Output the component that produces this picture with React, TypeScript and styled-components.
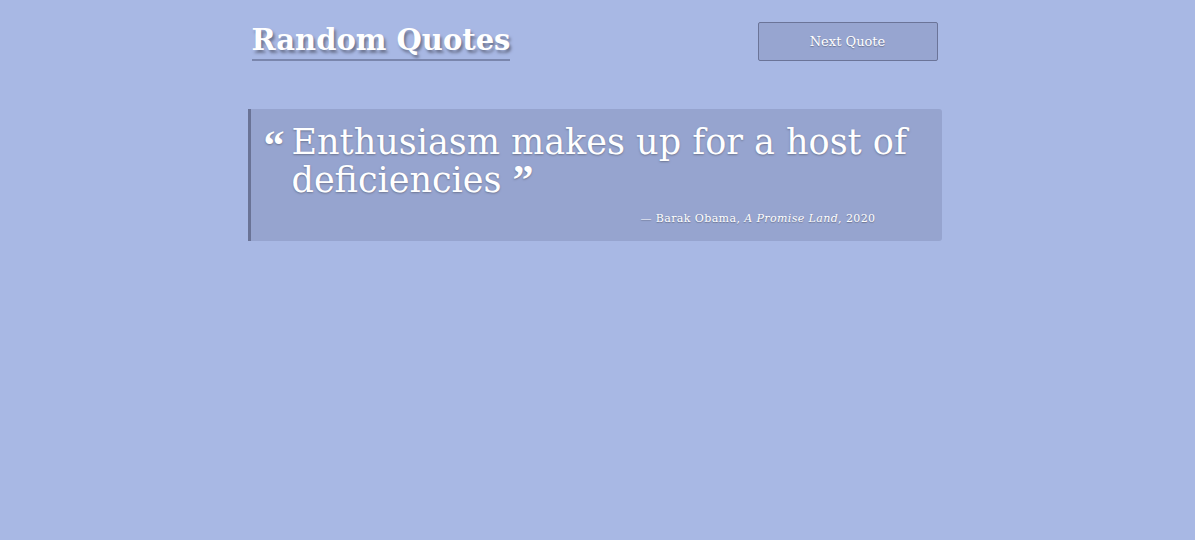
import React from "react";
import styled, { createGlobalStyle } from "styled-components";

const Global = createGlobalStyle`
  html, body { margin: 0; padding: 0; background: #a8b8e4; }
  body { font-family: "DejaVu Serif", "Liberation Serif", serif; color: #fff; }
`;

const Page = styled.div`
  width: 700px;
  margin: 0 auto;
  padding: 22px 6px 0 0;
  box-sizing: border-box;
`;

const Header = styled.header`
  display: flex;
  justify-content: space-between;
  align-items: flex-start;
  padding: 0 4px 0 4px;
`;

const Title = styled.h1`
  margin: 0;
  font-size: 29px;
  font-weight: bold;
  line-height: 37px;
  color: #fff;
  text-shadow: 2px 3px 3px #6d7591;
  border-bottom: 2px solid #7a86ad;
`;

const Button = styled.button`
  width: 180px;
  height: 39px;
  background: #97a5d0;
  border: 1px solid #6b7498;
  border-radius: 2px;
  color: #fff;
  font-family: inherit;
  font-size: 13px;
  text-shadow: 0 1px 1px #6d7591;
  cursor: pointer;
`;

const Card = styled.blockquote`
  margin: 48px 0 0;
  background: #96a4cf;
  border-left: 3px solid #6a7396;
  border-radius: 0 3px 3px 0;
  padding: 14px 30px 16px 13px;
`;

const QuoteRow = styled.div`
  display: flex;
  gap: 7px;
`;

const Mark = styled.span`
  font-family: "Liberation Serif", serif;
  font-size: 42px;
  font-weight: bold;
  line-height: 44px;
  text-shadow: 0 1px 2px #6d7591;
`;

const QuoteText = styled.p`
  margin: 0;
  font-size: 35px;
  line-height: 38px;
  text-shadow: 0 1px 2px #6d7591;
`;

const CloseMark = styled.span`
  display: inline-block;
  font-family: "Liberation Serif", serif;
  font-weight: bold;
  font-size: 42px;
  line-height: 30px;
  height: 30px;
  vertical-align: top;
  padding-top: 4px;
`;

const Attribution = styled.footer`
  text-align: right;
  font-size: 11px;
  margin-top: 13px;
  padding-right: 36px;
  letter-spacing: 0.4px;
  text-shadow: 0 1px 1px #6d7591;
  cite { font-style: italic; }
`;

export default function App() {
  return (
    <>
      <Global />
      <Page>
        <Header>
          <Title>Random Quotes</Title>
          <Button>Next Quote</Button>
        </Header>
        <Card>
          <QuoteRow>
            <Mark>“</Mark>
            <QuoteText>
              Enthusiasm makes up for a host of deficiencies <CloseMark>”</CloseMark>
            </QuoteText>
          </QuoteRow>
          <Attribution>
            — Barak Obama, <cite>A Promise Land</cite>, 2020
          </Attribution>
        </Card>
      </Page>
    </>
  );
}
